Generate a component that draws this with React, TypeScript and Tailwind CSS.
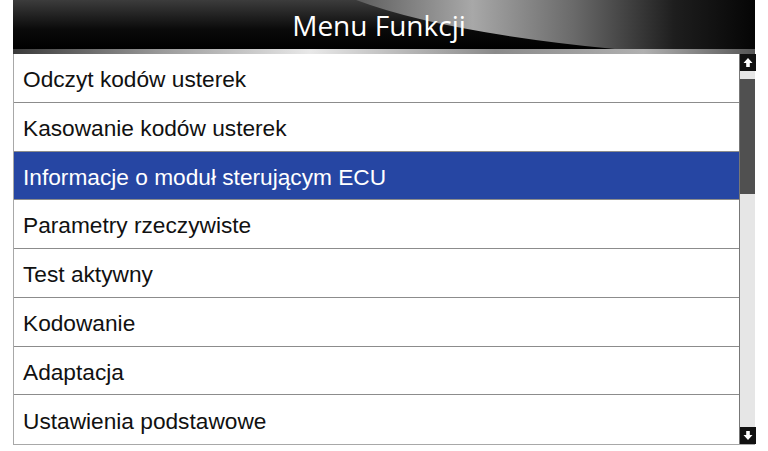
const items = [
  'Odczyt kodów usterek',
  'Kasowanie kodów usterek',
  'Informacje o moduł sterującym ECU',
  'Parametry rzeczywiste',
  'Test aktywny',
  'Kodowanie',
  'Adaptacja',
  'Ustawienia podstawowe',
];

const selected = 2;

function HeaderArt() {
  return (
    <svg className="absolute inset-0 h-full w-full" viewBox="0 0 746 49" preserveAspectRatio="none">
      <defs>
        <linearGradient id="base" x1="0" y1="0" x2="0" y2="1">
          <stop offset="0" stopColor="#3c3c3c" />
          <stop offset="0.6" stopColor="#0a0a0a" />
          <stop offset="1" stopColor="#000" />
        </linearGradient>
        <linearGradient id="sheen" x1="340" y1="0" x2="746" y2="0" gradientUnits="userSpaceOnUse">
          <stop offset="0" stopColor="#5a5a5a" />
          <stop offset="0.3" stopColor="#a8a8a8" />
          <stop offset="0.55" stopColor="#6a6a6a" />
          <stop offset="0.8" stopColor="#1e1e1e" />
          <stop offset="1" stopColor="#050505" />
        </linearGradient>
      </defs>
      <rect width="746" height="49" fill="url(#base)" />
      <path d="M345 0 Q430 32 605 49 L746 49 L746 0 Z" fill="url(#sheen)" />
    </svg>
  );
}

function Arrow({ up }: { up: boolean }) {
  return (
    <div className="flex h-[17px] w-[16px] items-center justify-center bg-[#111]">
      <svg width="10" height="11" viewBox="0 0 10 11" className={up ? '' : 'rotate-180'}>
        <path d="M5 1 L9.5 6 L6.8 6 L6.8 10 L3.2 10 L3.2 6 L0.5 6 Z" fill="#fff" />
      </svg>
    </div>
  );
}

export default function App() {
  return (
    <div className="h-[451px] w-[768px] bg-white px-[13px] pb-[7px]">
      <div className="relative flex h-[49px] items-center justify-center overflow-hidden pr-[10px]">
        <HeaderArt />
        <span className="relative text-[28px] leading-none text-white" style={{ fontFamily: '"Open Sans", sans-serif' }}>
          Menu Funkcji
        </span>
      </div>
      <div className="h-[5px] bg-[linear-gradient(to_right,#3a3a3a,#9a9a9a_20%,#e8e8e8_40%,#8a8a8a_65%,#b0b0b0_85%,#555)]" />
      <div className="flex h-[391px] border-l border-b border-[#a8a8a8]">
        <div className="flex flex-1 flex-col" style={{ fontFamily: '"Liberation Sans", Arial, sans-serif' }}>
          {items.map((label, i) => (
            <div
              key={label}
              className={`flex h-[48.75px] items-center px-[9px] pt-[3px] text-[22.7px] leading-none ${
                i < items.length - 1 ? 'border-b border-[#8c8c8c]' : ''
              } ${i === selected ? 'bg-[#2646a3] text-white' : 'text-[#111]'}`}
            >
              {label}
            </div>
          ))}
        </div>
        <div className="flex w-[16px] flex-col border-l border-[#777] bg-[#e6e6e6]">
          <Arrow up />
          <div className="h-[8px]" />
          <div className="h-[115px] bg-[#505050]" />
          <div className="flex-1" />
          <Arrow up={false} />
        </div>
      </div>
    </div>
  );
}
